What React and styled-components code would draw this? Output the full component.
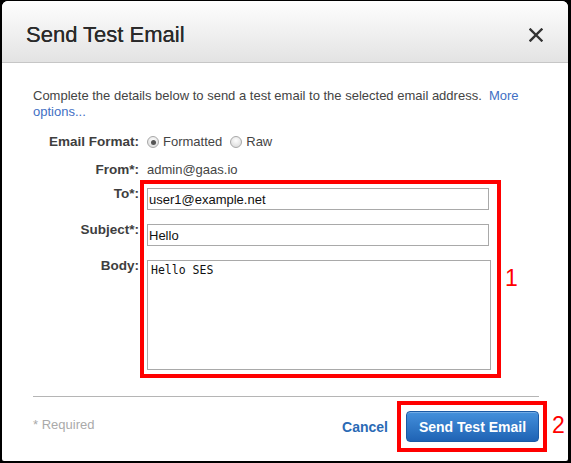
import React from "react";
import styled, { createGlobalStyle } from "styled-components";

const GlobalStyle = createGlobalStyle`
  html, body {
    margin: 0;
    padding: 0;
    background: #000;
  }
  body {
    font-family: "Liberation Sans", Arial, sans-serif;
    font-size: 13px;
    color: #444;
  }
`;

const Page = styled.div`
  width: 571px;
  height: 463px;
  padding: 1px 0 0 2px;
  box-sizing: border-box;
`;

const Dialog = styled.div`
  position: relative;
  width: 566px;
  height: 460px;
  background: #fff;
  border-radius: 6px 6px 2px 2px;
  overflow: hidden;
  display: flex;
  flex-direction: column;
`;

const Header = styled.div`
  height: 62px;
  box-sizing: border-box;
  padding: 21px 25px 0 24px;
  display: flex;
  justify-content: space-between;
  align-items: flex-start;
  background: linear-gradient(#fefefe, #e3e3e3);
  border-bottom: 1px solid #c6c6c6;
`;

const Title = styled.h1`
  margin: 0;
  font-size: 22px;
  line-height: 26px;
  font-weight: normal;
  color: #2a2a2a;
  text-shadow: 0 0 0.5px #2a2a2a;
`;

const CloseButton = styled.button`
  border: 0;
  padding: 0;
  margin-top: 6px;
  background: none;
  width: 14px;
  height: 14px;
  display: flex;
  cursor: pointer;
`;

const Body = styled.div`
  flex: 1;
  padding: 25px 29px 0 31px;
  display: flex;
  flex-direction: column;
`;

const Intro = styled.p`
  margin: 0;
  line-height: 16px;
  color: #444;
`;

const Link = styled.a`
  color: #3f6fc4;
  text-decoration: none;
`;

const Form = styled.div`
  margin-top: 14px;
  display: flex;
  flex-direction: column;
`;

const Row = styled.div`
  display: grid;
  grid-template-columns: 106px 1fr;
  column-gap: 8px;
  align-items: start;
  margin-top: ${(p) => p.$gap || 0}px;
`;

const Label = styled.label`
  text-align: right;
  font-weight: bold;
  font-size: 13.5px;
  line-height: 16px;
  color: #3e3e3e;
  margin-top: ${(p) => (p.$field ? -2 : 0)}px;
`;

const Value = styled.div`
  line-height: 16px;
  color: #444;
  display: flex;
  align-items: center;
`;

const Radio = styled.span`
  width: 12px;
  height: 12px;
  box-sizing: border-box;
  border-radius: 50%;
  border: 1px solid #a8a8a8;
  background: radial-gradient(circle at 50% 35%, #fdfdfd, #d6d6d6);
  display: inline-flex;
  align-items: center;
  justify-content: center;
  margin-right: 4px;
  margin-left: ${(p) => p.$offset || 0}px;

  &::after {
    content: "";
    width: 5px;
    height: 5px;
    border-radius: 50%;
    background: ${(p) => (p.$checked ? "#555" : "transparent")};
  }
`;

const TextInput = styled.input`
  width: 342px;
  height: 22px;
  box-sizing: border-box;
  border: 1px solid #a9a9a9;
  padding: 0 1px;
  margin: 0;
  font-family: "Liberation Sans", Arial, sans-serif;
  font-size: 13px;
  color: #111;
  outline: none;
`;

const TextArea = styled.textarea`
  width: 344px;
  height: 110px;
  box-sizing: border-box;
  border: 1px solid #a9a9a9;
  padding: 2px 3px;
  margin: 0;
  resize: none;
  font-family: "DejaVu Sans Mono", monospace;
  font-size: 11.5px;
  line-height: 15px;
  color: #111;
  outline: none;
  display: block;
`;

const Divider = styled.hr`
  margin: 26px 0 0;
  border: 0;
  border-top: 1px solid #b5b5b5;
  height: 0;
`;

const Footer = styled.div`
  padding-top: 14px;
  display: flex;
  align-items: center;
`;

const Required = styled.span`
  align-self: flex-start;
  margin-top: 6px;
  line-height: 16px;
  color: #aaa;
  flex: 1;
`;

const Cancel = styled.a`
  font-weight: bold;
  font-size: 14px;
  line-height: 16px;
  color: #2a6ab5;
  text-decoration: none;
  margin-right: 18px;
`;

const PrimaryButton = styled.button`
  width: 133px;
  height: 31px;
  padding: 0;
  border: 1px solid #1b5aa5;
  border-radius: 4px;
  background: linear-gradient(#4490dc, #1f63b4);
  box-shadow: inset 0 1px 0 rgba(255, 255, 255, 0.25);
  color: #fff;
  font-family: "Liberation Sans", Arial, sans-serif;
  font-weight: bold;
  font-size: 14px;
  cursor: pointer;
`;

const Callout = styled.div`
  position: absolute;
  left: ${(p) => p.$left}px;
  top: ${(p) => p.$top}px;
  width: ${(p) => p.$width}px;
  height: ${(p) => p.$height}px;
  box-sizing: border-box;
  border: 4px solid #ff0000;
  pointer-events: none;
`;

const CalloutNumber = styled.span`
  position: absolute;
  left: ${(p) => p.$left}px;
  top: ${(p) => p.$top}px;
  font-size: 23px;
  line-height: 23px;
  color: #ff0000;
`;

function CloseIcon() {
  return (
    <svg width="14" height="14" viewBox="0 0 14 14">
      <path d="M1.5 1.5 L12.5 12.5 M12.5 1.5 L1.5 12.5" stroke="#333" strokeWidth="2.4" strokeLinecap="square" />
    </svg>
  );
}

export default function App() {
  return (
    <>
      <GlobalStyle />
      <Page>
        <Dialog>
          <Header>
            <Title>Send Test Email</Title>
            <CloseButton aria-label="Close">
              <CloseIcon />
            </CloseButton>
          </Header>

          <Body>
            <Intro>
              Complete the details below to send a test email to the selected email address.&nbsp; <Link href="#">More</Link> <Link href="#">options...</Link>
            </Intro>

            <Form>
              <Row>
                <Label>Email Format:</Label>
                <Value>
                  <Radio $checked />
                  Formatted
                  <Radio $offset={8} />
                  Raw
                </Value>
              </Row>
              <Row $gap={12}>
                <Label>From*:</Label>
                <Value>admin@gaas.io</Value>
              </Row>
              <Row $gap={10}>
                <Label $field>To*:</Label>
                <TextInput defaultValue="user1@example.net" />
              </Row>
              <Row $gap={14}>
                <Label $field>Subject*:</Label>
                <TextInput defaultValue="Hello" />
              </Row>
              <Row $gap={14}>
                <Label $field>Body:</Label>
                <TextArea defaultValue="Hello SES" />
              </Row>
            </Form>

            <Divider />

            <Footer>
              <Required>* Required</Required>
              <Cancel href="#">Cancel</Cancel>
              <PrimaryButton>Send Test Email</PrimaryButton>
            </Footer>
          </Body>

          <Callout $left={138} $top={179} $width={361} $height={198} />
          <CalloutNumber $left={503} $top={266}>1</CalloutNumber>
          <Callout $left={395} $top={400} $width={150} $height={51} />
          <CalloutNumber $left={550} $top={413}>2</CalloutNumber>
        </Dialog>
      </Page>
    </>
  );
}
